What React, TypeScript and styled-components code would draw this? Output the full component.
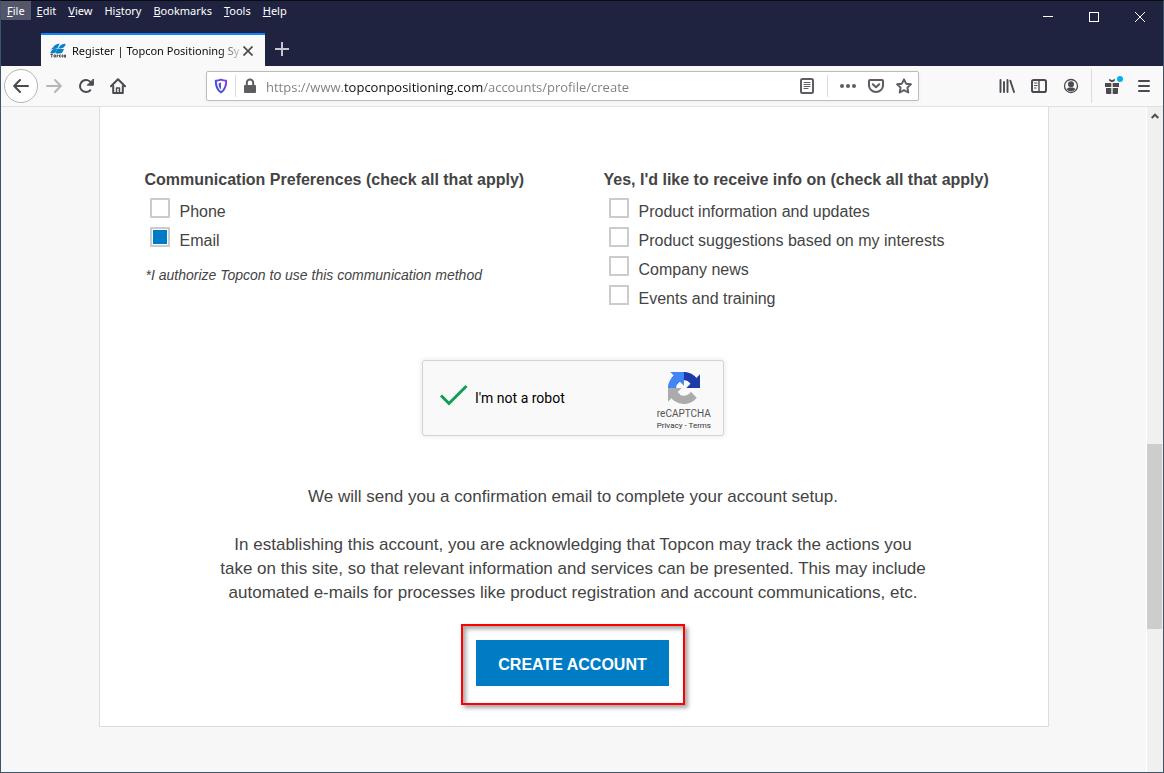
import React from "react";
import styled, { createGlobalStyle } from "styled-components";

const UI_FONT = `"Noto Sans", "Open Sans", sans-serif`;
const ADDRESS_FONT = `"Open Sans", "Noto Sans", sans-serif`;
const BODY_FONT = `"Liberation Sans", Arial, sans-serif`;

const GlobalStyle = createGlobalStyle`
  *, *::before, *::after { box-sizing: border-box; }
  html, body, #root { height: 100%; }
  body { margin: 0; background: #202340; }
  button, input { font: inherit; color: inherit; }
  button { border: 0; padding: 0; background: none; cursor: pointer; }
  svg { display: block; flex: none; }
`;

const BrowserWindow = styled.div`
  display: flex;
  flex-direction: column;
  min-height: 100%;
  border: 1px solid #3d5567;
  border-top-color: #0b0b12;
  font-family: ${UI_FONT};
`;

/* ---------- title bar ---------- */

const TitleBar = styled.header`
  display: flex;
  flex-direction: column;
  height: 65px;
  background: #202340;
  color: #fff;
`;

const TitleRow = styled.div`
  display: flex;
  justify-content: space-between;
  align-items: flex-start;
  height: 32px;
`;

const MenuBar = styled.nav`
  display: flex;
  font-size: 11px;
`;

const MenuButton = styled.button<{ $active?: boolean }>`
  height: 19px;
  padding: 0 6px;
  line-height: 19px;
  background: ${(p) => (p.$active ? "#54566b" : "transparent")};
`;

const WindowControls = styled.div`
  display: flex;
`;

const WindowButton = styled.button`
  display: grid;
  place-items: center;
  width: 46px;
  height: 31px;
`;

const TabStrip = styled.div`
  display: flex;
  padding-left: 40px;
`;

const Tab = styled.div`
  display: flex;
  align-items: center;
  width: 224px;
  height: 33px;
  padding: 0 12px 0 9px;
  border-top: 2px solid #0a84ff;
  background: #f9f9fa;
  color: #0c0c0d;
`;

const TabTitle = styled.span`
  flex: 1;
  margin-left: 6px;
  overflow: hidden;
  white-space: nowrap;
  font-size: 11px;
  line-height: 20px;
  mask-image: linear-gradient(to right, #000 148px, transparent 172px);
`;

const NewTab = styled.button`
  display: grid;
  place-items: center;
  width: 34px;
  height: 32px;
`;

/* ---------- navigation bar ---------- */

const Toolbar = styled.div`
  display: flex;
  align-items: center;
  height: 41px;
  padding: 0 3px;
  border-bottom: 1px solid #e0e0e1;
  background: #f9f9fa;
  color: #4a4a4f;
`;

const BackButton = styled.button`
  display: grid;
  place-items: center;
  width: 34px;
  height: 34px;
  border: 1px solid #b5b5b7;
  border-radius: 50%;
  background: #fff;
`;

const ToolButton = styled.button<{ $dim?: boolean }>`
  display: grid;
  place-items: center;
  width: 32px;
  height: 32px;
  color: ${(p) => (p.$dim ? "#b6b6b8" : "inherit")};
`;

const Divider = styled.span<{ $height: number; $gap?: number }>`
  width: 1px;
  height: ${(p) => p.$height}px;
  margin: 0 ${(p) => p.$gap ?? 0}px;
  background: #dcdcde;
`;

const AddressBar = styled.div`
  display: flex;
  flex: 1;
  align-items: center;
  min-width: 0;
  height: 30px;
  margin: 0 72px;
  border: 1px solid #bcbcbe;
  border-radius: 2px;
  background: #fff;
  box-shadow: 0 1px 4px rgba(0, 0, 0, 0.05);
`;

const AddressButton = styled.button`
  display: grid;
  place-items: center;
  width: 28px;
  height: 28px;
  color: #5c5c61;
`;

const AddressInput = styled.input`
  flex: 1;
  min-width: 0;
  height: 28px;
  padding: 2px 0 0 2px;
  border: 0;
  outline: 0;
  font-family: ${ADDRESS_FONT};
  font-size: 13px;
  color: transparent;
  background: linear-gradient(to right, #7d7d81 80px, #0c0c0d 80px, #0c0c0d 219px, #7d7d81 219px);
  background-clip: text;
  -webkit-background-clip: text;
`;

/* ---------- page ---------- */

const Viewport = styled.div`
  display: flex;
  flex: 1;
  background: #f7f7f7;
`;

const Page = styled.main`
  flex: 1;
  padding-bottom: 45px;
  font-family: ${BODY_FONT};
  color: #444;
`;

const Card = styled.form`
  display: flex;
  flex-direction: column;
  align-items: center;
  max-width: 950px;
  margin: 0 auto;
  padding: 64px 46px 21px 45px;
  border: 1px solid #dcdcdc;
  border-top: 0;
  background: #fff;
`;

const Preferences = styled.div`
  display: grid;
  grid-template-columns: 1fr 1fr;
  gap: 61px;
  width: 100%;
`;

const Group = styled.fieldset`
  min-width: 0;
  margin: 0;
  padding: 0;
  border: 0;
  white-space: nowrap;
`;

const Legend = styled.legend`
  padding: 0;
  margin-bottom: 9px;
  font-size: 16px;
  font-weight: bold;
  line-height: 18px;
`;

const CheckRow = styled.label`
  display: flex;
  gap: 10px;
  height: 29px;
  padding-left: 5px;
  font-size: 16px;
  line-height: 28px;
`;

const CheckBox = styled.input`
  appearance: none;
  width: 20px;
  height: 20px;
  margin: 0;
  border: 2px solid #ccc;
  background: #fff;

  &:checked {
    background: #007cc5;
    box-shadow: inset 0 0 0 1px #fff;
  }
`;

const Note = styled.p`
  margin: 10px 0 0 1px;
  font-size: 14px;
  font-style: italic;
  line-height: 18px;
`;

const Captcha = styled.div`
  display: flex;
  align-items: center;
  width: 302px;
  height: 76px;
  margin-top: 46px;
  padding: 0 12px 0 16px;
  border: 1px solid #d3d3d3;
  border-radius: 3px;
  background: #f9f9f9;
  box-shadow: 0 0 4px 1px rgba(0, 0, 0, 0.08);
  font-family: Roboto, sans-serif;
  font-size: 14px;
  color: #000;
`;

const CaptchaCheck = styled.label`
  display: flex;
  flex: 1;
  align-items: center;
  gap: 6px;
`;

const CaptchaBox = styled.span`
  display: grid;
  padding-bottom: 5px;

  > * { grid-area: 1 / 1; }
`;

const CaptchaInput = styled.input`
  width: 100%;
  height: 100%;
  margin: 0;
  opacity: 0;
`;

const CaptchaBrand = styled.div`
  display: flex;
  flex-direction: column;
  align-items: center;
  padding-top: 8px;
  font-size: 10px;
  line-height: 12px;
  color: #555;
`;

const CaptchaName = styled.div`
  margin-top: 4px;
`;

const CaptchaLinks = styled.div`
  font-size: 8px;
  color: #333;
`;

const CaptchaLink = styled.a`
  color: inherit;
  text-decoration: none;
`;

const Message = styled.p<{ $top: number }>`
  max-width: 712px;
  margin: ${(p) => p.$top}px 0 0;
  font-size: 17px;
  line-height: 24px;
  text-align: center;
`;

const Highlight = styled.div`
  margin-top: 19px;
  padding: 14px 14px 17px 13px;
  border: 2px solid #f00;
  box-shadow: 3px 3px 4px rgba(0, 0, 0, 0.35), inset 3px 3px 4px rgba(0, 0, 0, 0.35);
`;

const SubmitButton = styled.button`
  min-width: 193px;
  height: 46px;
  padding: 4px 20px 0;
  background: #007cc5;
  color: #fff;
  font-size: 16px;
  font-weight: bold;
`;

/* ---------- scroll bar ---------- */

const ScrollTrack = styled.div`
  display: flex;
  flex-direction: column;
  width: 17px;
  border-left: 1px solid #fff;
  background: #f0f0f0;
`;

const ScrollArrow = styled.button`
  display: grid;
  place-items: center;
  height: 18px;
  color: #505050;
`;

const ScrollGap = styled.div<{ $grow: number }>`
  flex: ${(p) => p.$grow} 0 0;
`;

const ScrollThumb = styled.div`
  flex: 185 0 0;
  width: 15px;
  background: #cdcdcd;
`;

/* ---------- icons ---------- */

type IconProps = { children: React.ReactNode; size?: number };

const Icon = ({ children, size = 16 }: IconProps) => (
  <svg width={size} height={size} viewBox="0 0 16 16" fill="none" stroke="currentColor" strokeWidth="2" strokeLinecap="round" strokeLinejoin="round" aria-hidden="true">
    {children}
  </svg>
);

const BackIcon = () => <Icon><path d="M15 8H1.6M7 2L1.2 8 7 14" /></Icon>;
const ForwardIcon = () => <Icon><path d="M1 8h13.4M9 2l5.8 6L9 14" /></Icon>;
const ReloadIcon = () => (
  <Icon>
    <path d="M12.300 12.200A6 6 0 1 1 13.200 5" />
    <path d="M15.400 1.400V7.200H9.600z" fill="currentColor" strokeWidth="1" />
  </Icon>
);
const HomeIcon = () => (
  <Icon>
    <path d="M1 8.2L8 1.2l7 7" />
    <path d="M3.2 8v7h9.6V8" />
    <path d="M6.5 14.5V10h3v4.5" strokeWidth="1.4" />
    <path d="M9 12.4v.2" strokeWidth="1" />
  </Icon>
);
const ShieldIcon = () => (
  <Icon>
    <defs>
      <linearGradient id="shield" x1="1" y1="0" x2="0" y2="1">
        <stop offset="0" stopColor="#8a3fe8" />
        <stop offset="1" stopColor="#2a55d8" />
      </linearGradient>
    </defs>
    <path d="M8 1.6c2 .8 3.700 1.100 5.200 1.200 0 5.200-.6 9-5.200 11.500C3.400 11.800 2.800 8 2.800 2.800 4.300 2.700 6 2.400 8 1.600z" stroke="url(#shield)" />
    <path d="M8 4.600v6.800C6 9.800 5.600 7.800 5.600 5.200z" fill="url(#shield)" stroke="none" />
  </Icon>
);
const LockIcon = () => (
  <Icon>
    <path d="M4.800 7V4.800a3.200 3.200 0 0 1 6.400 0V7" />
    <rect x="2" y="7" width="12" height="8" rx="1" fill="currentColor" stroke="none" />
  </Icon>
);
const ReaderIcon = () => (
  <Icon>
    <rect x="2" y="1" width="12" height="14" rx="1.500" />
    <path d="M5 4.500h6M5 6.500h6M5 8.500h6M5 10.500h4" strokeWidth="1" />
  </Icon>
);
const DotsIcon = () => (
  <Icon>
    <g fill="currentColor" stroke="none">
      <circle cx="2" cy="8" r="2" /><circle cx="8" cy="8" r="2" /><circle cx="14" cy="8" r="2" />
    </g>
  </Icon>
);
const PocketIcon = () => (
  <Icon>
    <path d="M2 2h12a1 1 0 0 1 1 1v4.500a7 6.500 0 0 1-14 0V3a1 1 0 0 1 1-1z" />
    <path d="M4.800 6.200L8 9.200l3.200-3" />
  </Icon>
);
const StarIcon = () => (
  <Icon><path d="M8 1.300l2.100 4.400 4.800.6-3.500 3.300.9 4.900L8 12.100l-4.300 2.400.9-4.900L1.100 6.300l4.800-.6z" strokeWidth="1.900" /></Icon>
);
const LibraryIcon = () => (
  <Icon><path d="M1.500 2v12M5 4v10M8.500 2v12M11.300 2.800L15 14" strokeWidth="1.900" /></Icon>
);
const SidebarIcon = () => (
  <Icon>
    <rect x="1" y="2" width="14" height="12" rx="1.800" />
    <path d="M8 2v12" strokeWidth="1.400" />
    <path d="M3.500 5h2.500M3.500 7.500h2.500M3.500 10h1.500" strokeWidth="1" />
  </Icon>
);
const AccountIcon = () => (
  <Icon>
    <circle cx="8" cy="8" r="6.500" strokeWidth="1.300" />
    <circle cx="8" cy="6.200" r="3" fill="currentColor" stroke="none" />
    <path d="M3.400 11c1.200-.7 1.800-1 2.600-1.500h4c.8.500 1.400.8 2.600 1.500A5.500 5.500 0 0 1 8 13.300 5.500 5.500 0 0 1 3.400 11z" fill="currentColor" stroke="none" />
  </Icon>
);
const GiftIcon = () => (
  <svg width="24" height="24" viewBox="0 0 24 24" fill="currentColor" aria-hidden="true">
    <path d="M5 9h6.300v4H5zM12.700 9H19v4h-6.300zM6 14h5.300v6H7a1 1 0 0 1-1-1zM12.700 14H18v5a1 1 0 0 1-1 1h-4.300z" />
    <path d="M9.200 4.800l2.800 1.400 2.800-1.400V7L12 8.300 9.200 7z" />
    <circle cx="20" cy="5" r="3" fill="#00b0ff" />
  </svg>
);
const MenuIcon = () => <Icon><path d="M3 3h10M3 8h10M3 13h10" /></Icon>;

const TopconIcon = () => (
  <svg width="16" height="16" viewBox="0 0 16 16" aria-hidden="true">
    <g fill="#0a80c8">
      <path d="M3.200 4.200C4.600 1.800 6.600.6 9.600.7L7.300 5.500 1 6.400C1.500 5.500 2.300 4.800 3.200 4.200z" />
      <path d="M9.600 3.600C11 1.500 12.700.6 15.800.7c-.9 3-2.200 4.600-5 4.700l-3 .1z" />
      <path d="M.2 10.300C.9 7.600 2.300 6 5.200 6l2 .1-2 3.700c-1.500.8-3.200.9-5 .5z" />
      <path d="M7.200 6h6.900l-2 3.800c-1.500.8-4.300.9-6.900.5z" />
    </g>
    <g fill="none" stroke="#555" strokeWidth="1">
      <path d="M.5 11.500h2.500M1.700 11.500v3M4 12h1.500v2H4zM7 14.500V12h1v1H7M11 12H9.500v2H11M12 12h1v2h-1zM14.500 14.500V12h1v2.500" />
    </g>
  </svg>
);

const RecaptchaIcon = () => (
  <svg width="32" height="32" viewBox="0 0 64 64" aria-hidden="true">
    <path d="M64 31.955l-.033-1.370V4.687l-7.160 7.160C50.948 4.674 42.033.093 32.050.093c-10.400 0-19.622 4.960-25.458 12.640l11.736 11.860a15.550 15.550 0 0 1 4.754-5.334c2.050-1.600 4.952-2.906 8.968-2.906.485 0 .86.057 1.135.163 4.976.393 9.288 3.140 11.828 7.124l-8.307 8.307L64 31.953" fill="#1c3aa9" />
    <path d="M31.862.094l-1.370.033H4.594l7.160 7.160C4.580 13.147 0 22.060 0 32.046c0 10.400 4.960 19.622 12.640 25.458L24.500 45.768a15.550 15.550 0 0 1-5.334-4.754c-1.600-2.050-2.906-4.952-2.906-8.968 0-.485.057-.86.163-1.135.393-4.976 3.140-9.288 7.124-11.828l8.307 8.307L31.860.095" fill="#4285f4" />
    <path d="M.001 32.045l.033 1.370v25.898l7.160-7.160c5.860 7.173 14.774 11.754 24.760 11.754 10.400 0 19.622-4.960 25.458-12.640l-11.736-11.860a15.550 15.550 0 0 1-4.754 5.334c-2.050 1.600-4.952 2.906-8.968 2.906-.485 0-.86-.057-1.135-.163-4.976-.393-9.288-3.140-11.828-7.124l8.307-8.307-27.297-.008" fill="#ababab" />
  </svg>
);

/* ---------- data ---------- */

// Each menu: the text before its access key, the key, and the rest.
const menus: [string, string, string][] = [
  ["", "F", "ile"], ["", "E", "dit"], ["", "V", "iew"], ["Hi", "s", "tory"],
  ["", "B", "ookmarks"], ["", "T", "ools"], ["", "H", "elp"],
];
const topics = [
  "Product information and updates",
  "Product suggestions based on my interests",
  "Company news",
  "Events and training",
];

const Check = ({ label, checked }: { label: string; checked?: boolean }) => (
  <CheckRow>
    <CheckBox type="checkbox" defaultChecked={checked} />
    {label}
  </CheckRow>
);

export default function App() {
  return (
    <>
      <GlobalStyle />
      <BrowserWindow>
        <TitleBar>
          <TitleRow>
            <MenuBar>
              {menus.map(([before, key, after]) => (
                <MenuButton key={key + after} $active={after === "ile"}>{before}<u>{key}</u>{after}</MenuButton>
              ))}
            </MenuBar>
            <WindowControls>
              <WindowButton aria-label="Minimize">
                <svg width="10" height="10"><path d="M0 4.500h10" stroke="#fff" /></svg>
              </WindowButton>
              <WindowButton aria-label="Maximize">
                <svg width="10" height="10"><rect x=".5" y=".5" width="9" height="9" fill="none" stroke="#fff" /></svg>
              </WindowButton>
              <WindowButton aria-label="Close">
                <svg width="10" height="10"><path d="M0 0l10 10M10 0L0 10" stroke="#fff" /></svg>
              </WindowButton>
            </WindowControls>
          </TitleRow>
          <TabStrip>
            <Tab>
              <TopconIcon />
              <TabTitle>Register | Topcon Positioning Sy</TabTitle>
              <button aria-label="Close tab">
                <svg width="10" height="10" viewBox="0 0 10 10"><path d="M.5.5l9 9M9.500.5l-9 9" stroke="#4a4a4f" strokeWidth="1.700" /></svg>
              </button>
            </Tab>
            <NewTab aria-label="New tab">
              <svg width="14" height="14"><path d="M7 0v14M0 7h14" stroke="#c6c6d0" strokeWidth="2" /></svg>
            </NewTab>
          </TabStrip>
        </TitleBar>

        <Toolbar>
          <BackButton aria-label="Back"><BackIcon /></BackButton>
          <ToolButton $dim aria-label="Forward"><ForwardIcon /></ToolButton>
          <ToolButton aria-label="Reload"><ReloadIcon /></ToolButton>
          <ToolButton aria-label="Home"><HomeIcon /></ToolButton>
          <AddressBar>
            <AddressButton aria-label="Tracking protection"><ShieldIcon /></AddressButton>
            <Divider $height={22} />
            <AddressButton aria-label="Connection security"><LockIcon /></AddressButton>
            <AddressInput aria-label="Address" defaultValue="https://www.topconpositioning.com/accounts/profile/create" />
            <AddressButton aria-label="Reader view"><ReaderIcon /></AddressButton>
            <Divider $height={22} $gap={6} />
            <AddressButton aria-label="Page actions"><DotsIcon /></AddressButton>
            <AddressButton aria-label="Save to Pocket"><PocketIcon /></AddressButton>
            <AddressButton aria-label="Bookmark"><StarIcon /></AddressButton>
          </AddressBar>
          <ToolButton aria-label="Library"><LibraryIcon /></ToolButton>
          <ToolButton aria-label="Sidebars"><SidebarIcon /></ToolButton>
          <ToolButton aria-label="Account"><AccountIcon /></ToolButton>
          <Divider $height={34} $gap={4} />
          <ToolButton aria-label="What's new"><GiftIcon /></ToolButton>
          <ToolButton aria-label="Open menu"><MenuIcon /></ToolButton>
        </Toolbar>

        <Viewport>
          <Page>
            <Card>
              <Preferences>
                <Group>
                  <Legend>Communication Preferences (check all that apply)</Legend>
                  <Check label="Phone" />
                  <Check label="Email" checked />
                  <Note>*I authorize Topcon to use this communication method</Note>
                </Group>
                <Group>
                  <Legend>Yes, I'd like to receive info on (check all that apply)</Legend>
                  {topics.map((t) => <Check key={t} label={t} />)}
                </Group>
              </Preferences>

              <Captcha>
                <CaptchaCheck>
                  <CaptchaBox>
                    <CaptchaInput type="checkbox" defaultChecked />
                    <svg width="30" height="24" viewBox="0 0 30 24" fill="none" aria-hidden="true">
                      <path d="M2 11.500l8 8L27.500 2" stroke="#0f9d58" strokeWidth="3" />
                    </svg>
                  </CaptchaBox>
                  I'm not a robot
                </CaptchaCheck>
                <CaptchaBrand>
                  <RecaptchaIcon />
                  <CaptchaName>reCAPTCHA</CaptchaName>
                  <CaptchaLinks>
                    <CaptchaLink href="#privacy">Privacy</CaptchaLink> - <CaptchaLink href="#terms">Terms</CaptchaLink>
                  </CaptchaLinks>
                </CaptchaBrand>
              </Captcha>

              <Message $top={49}>We will send you a confirmation email to complete your account setup.</Message>
              <Message $top={24}>
                In establishing this account, you are acknowledging that Topcon may track the actions you take on this
                site, so that relevant information and services can be presented. This may include automated e-mails
                for processes like product registration and account communications, etc.
              </Message>
              <Highlight>
                <SubmitButton type="button">CREATE ACCOUNT</SubmitButton>
              </Highlight>
            </Card>
          </Page>
          <ScrollTrack>
            <ScrollArrow aria-label="Scroll up">
              <svg width="8" height="6" viewBox="0 0 8 6"><path d="M.7 5L4 1.700 7.300 5" fill="none" stroke="currentColor" strokeWidth="2" /></svg>
            </ScrollArrow>
            <ScrollGap $grow={319} />
            <ScrollThumb />
            <ScrollGap $grow={143} />
          </ScrollTrack>
        </Viewport>
      </BrowserWindow>
    </>
  );
}
